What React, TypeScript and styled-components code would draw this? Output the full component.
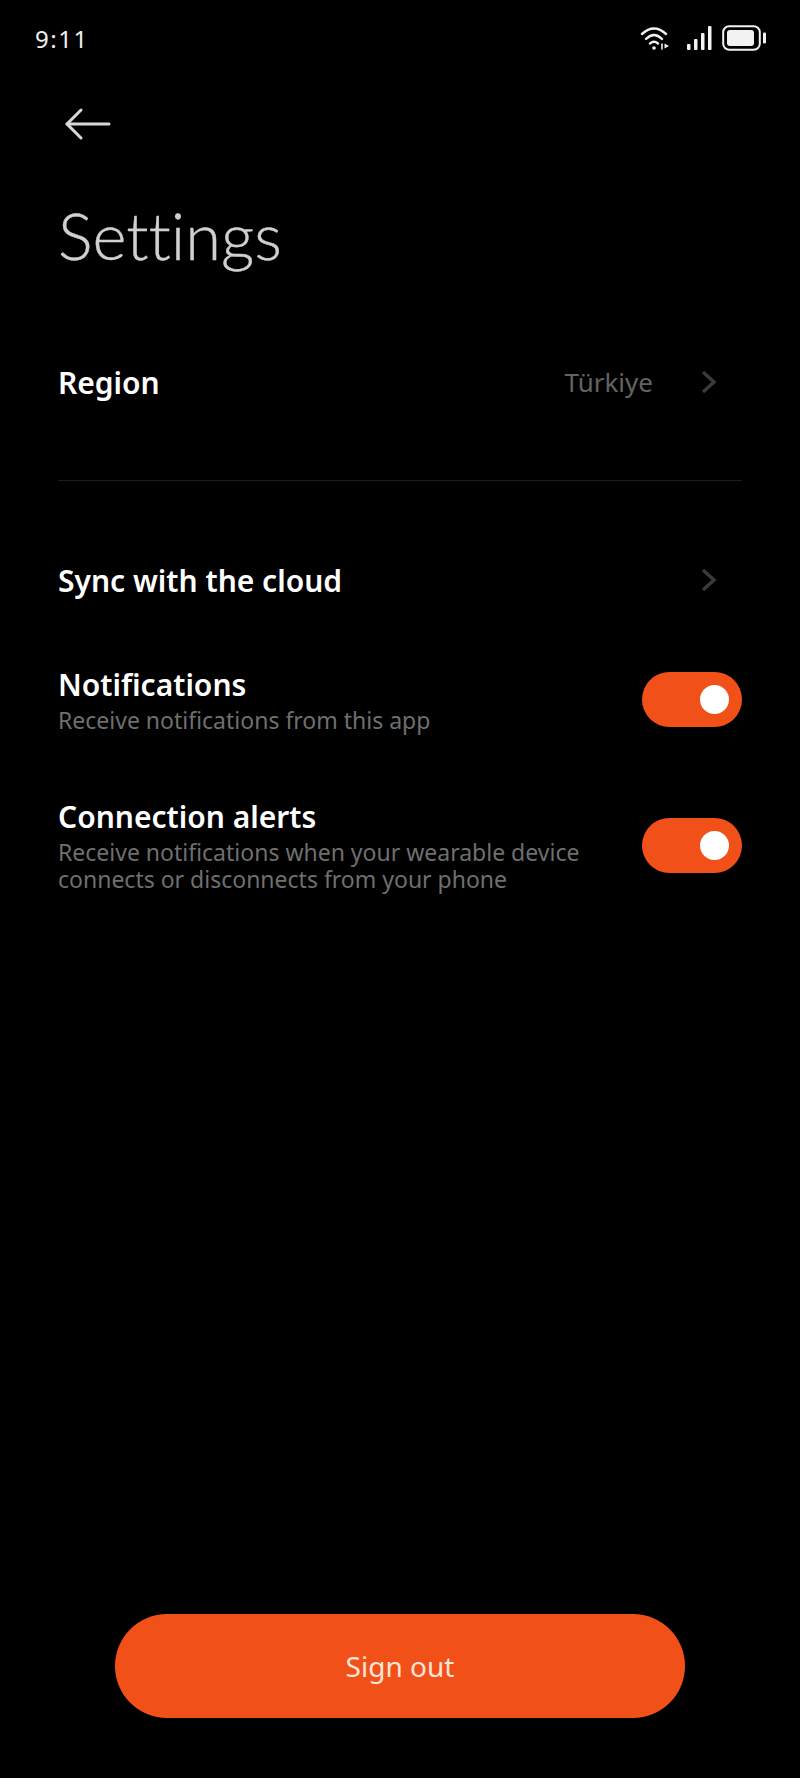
import styled, { createGlobalStyle } from "styled-components"

const Global = createGlobalStyle`
    html, body {
        margin: 0;
        background: #000;
    }
    * {
        box-sizing: border-box;
    }
`

const Orange = "#f25019"

const Page = styled.div`
    width: 800px;
    height: 1778px;
    background: #000;
    display: flex;
    flex-direction: column;
    font-family: "Noto Sans", sans-serif;
    color: #fff;
`

const StatusBar = styled.div`
    height: 38px;
    margin-top: 19px;
    padding: 0 33px 0 35px;
    display: flex;
    align-items: center;
    justify-content: space-between;
`

const Clock = styled.span`
    font-size: 24px;
    letter-spacing: 1.5px;
    color: #f0f0f0;
`

const StatusIcons = styled.div`
    display: flex;
    align-items: center;
    gap: 9px;
    svg:first-child {
        margin-right: 8px;
    }
`

const BackButton = styled.div`
    margin: 50px 0 0 65px;
    height: 34px;
    display: flex;
    align-items: center;
`

const Title = styled.h1`
    margin: 56px 0 0 58px;
    font-family: "Lato", sans-serif;
    font-size: 65px;
    line-height: 76px;
    font-weight: 300;
    font-variant-ligatures: none;
    -webkit-text-stroke: 0.4px #d0d0d0;
    color: #d0d0d0;
`

const Row = styled.div<{ $height: number }>`
    height: ${p => p.$height}px;
    padding: 0 58px;
    display: flex;
    align-items: center;
    justify-content: space-between;
`

const RegionRow = styled(Row)`
    margin-top: 60px;
    margin-bottom: 51px;
`

const Label = styled.div`
    font-size: 30px;
    line-height: 36px;
    font-weight: 600;
    color: #fff;
`

const RowLabel = styled(Label)`
    padding-top: 4px;
`

const TextBlock = styled.div`
    padding-top: 2px;
    ${Label} {
        margin-bottom: 4px;
    }
`

const Sub = styled.div`
    max-width: 540px;
    font-size: 23px;
    line-height: 27px;
    color: #6f6f6f;
`

const Value = styled.span`
    font-size: 26px;
    color: #636363;
    margin-right: 48px;
`

const Right = styled.div`
    display: flex;
    align-items: center;
    padding: 2px 25px 0 0;
`

const Divider = styled.div`
    height: 1px;
    margin: 0 58px 50px;
    background: #1d1d1d;
`

const Toggle = styled.div`
    width: 100px;
    height: 55px;
    border-radius: 28px;
    background: ${Orange};
    display: flex;
    align-items: center;
    justify-content: flex-end;
    padding-right: 13px;
`

const Knob = styled.div`
    width: 29px;
    height: 29px;
    border-radius: 50%;
    background: #fff;
`

const Footer = styled.div`
    margin-top: auto;
    padding-bottom: 60px;
    display: flex;
    justify-content: center;
`

const SignOut = styled.button`
    width: 570px;
    height: 104px;
    border: none;
    border-radius: 52px;
    background: ${Orange};
    color: #ffe4d8;
    font-family: "Noto Sans", sans-serif;
    font-size: 28px;
`

const Chevron = () => (
    <svg width="16" height="24" viewBox="0 0 16 24" fill="none" stroke="#3a3a3a" strokeWidth="3.4">
        <path d="M2 2 L13 12 L2 22" />
    </svg>
)

const App = () => (
    <Page>
        <Global />
        <StatusBar>
            <Clock>9:11</Clock>
            <StatusIcons>
                <svg width="30" height="26" viewBox="0 0 30 26" fill="none" stroke="#f2f2f2" strokeWidth="2.4" strokeLinecap="round">
                    <path d="M2 9 Q14 -2 26 9" />
                    <path d="M6 14 Q14 6 22 14" />
                    <path d="M10 18.5 Q14 15 18 18.5" />
                    <circle cx="14" cy="23" r="1.8" fill="#f2f2f2" stroke="none" />
                    <path d="M22 19 V24" strokeWidth="1.6" />
                    <path d="M24.5 18.5 L29 21 L24.5 23.5 Z" fill="#f2f2f2" stroke="none" />
                </svg>
                <svg width="26" height="26" viewBox="0 0 26 26" fill="#f2f2f2">
                    <rect x="0" y="19" width="3.500" height="6" rx="1" />
                    <rect x="7" y="14" width="3.500" height="11" rx="1" />
                    <rect x="14" y="8" width="3.500" height="17" rx="1" />
                    <rect x="21" y="1" width="3.500" height="24" rx="1" />
                </svg>
                <svg width="45" height="26" viewBox="0 0 45 26" fill="none">
                    <rect x="1.200" y="1.200" width="36.600" height="23.600" rx="6" stroke="#f2f2f2" strokeWidth="2" />
                    <rect x="5" y="5" width="27" height="16" rx="3" fill="#f2f2f2" />
                    <rect x="41" y="7.500" width="3" height="11" rx="1" fill="#f2f2f2" />
                </svg>
            </StatusIcons>
        </StatusBar>
        <BackButton>
            <svg width="46" height="32" viewBox="0 0 46 32" fill="none" stroke="#d8d8d8" strokeWidth="3" strokeLinecap="round" strokeLinejoin="round">
                <path d="M44 16 H2" />
                <path d="M16 2 L2 16 L16 30" />
            </svg>
        </BackButton>
        <Title>Settings</Title>
        <RegionRow $height={96}>
            <RowLabel>Region</RowLabel>
            <Right>
                <Value>Türkiye</Value>
                <Chevron />
            </Right>
        </RegionRow>
        <Divider />
        <Row $height={96}>
            <RowLabel>Sync with the cloud</RowLabel>
            <Right>
                <Chevron />
            </Right>
        </Row>
        <Row $height={144}>
            <TextBlock>
                <Label>Notifications</Label>
                <Sub>Receive notifications from this app</Sub>
            </TextBlock>
            <Toggle>
                <Knob />
            </Toggle>
        </Row>
        <Row $height={148}>
            <TextBlock>
                <Label>Connection alerts</Label>
                <Sub>Receive notifications when your wearable device connects or disconnects from your phone</Sub>
            </TextBlock>
            <Toggle>
                <Knob />
            </Toggle>
        </Row>
        <Footer>
            <SignOut>Sign out</SignOut>
        </Footer>
    </Page>
)

export default App
